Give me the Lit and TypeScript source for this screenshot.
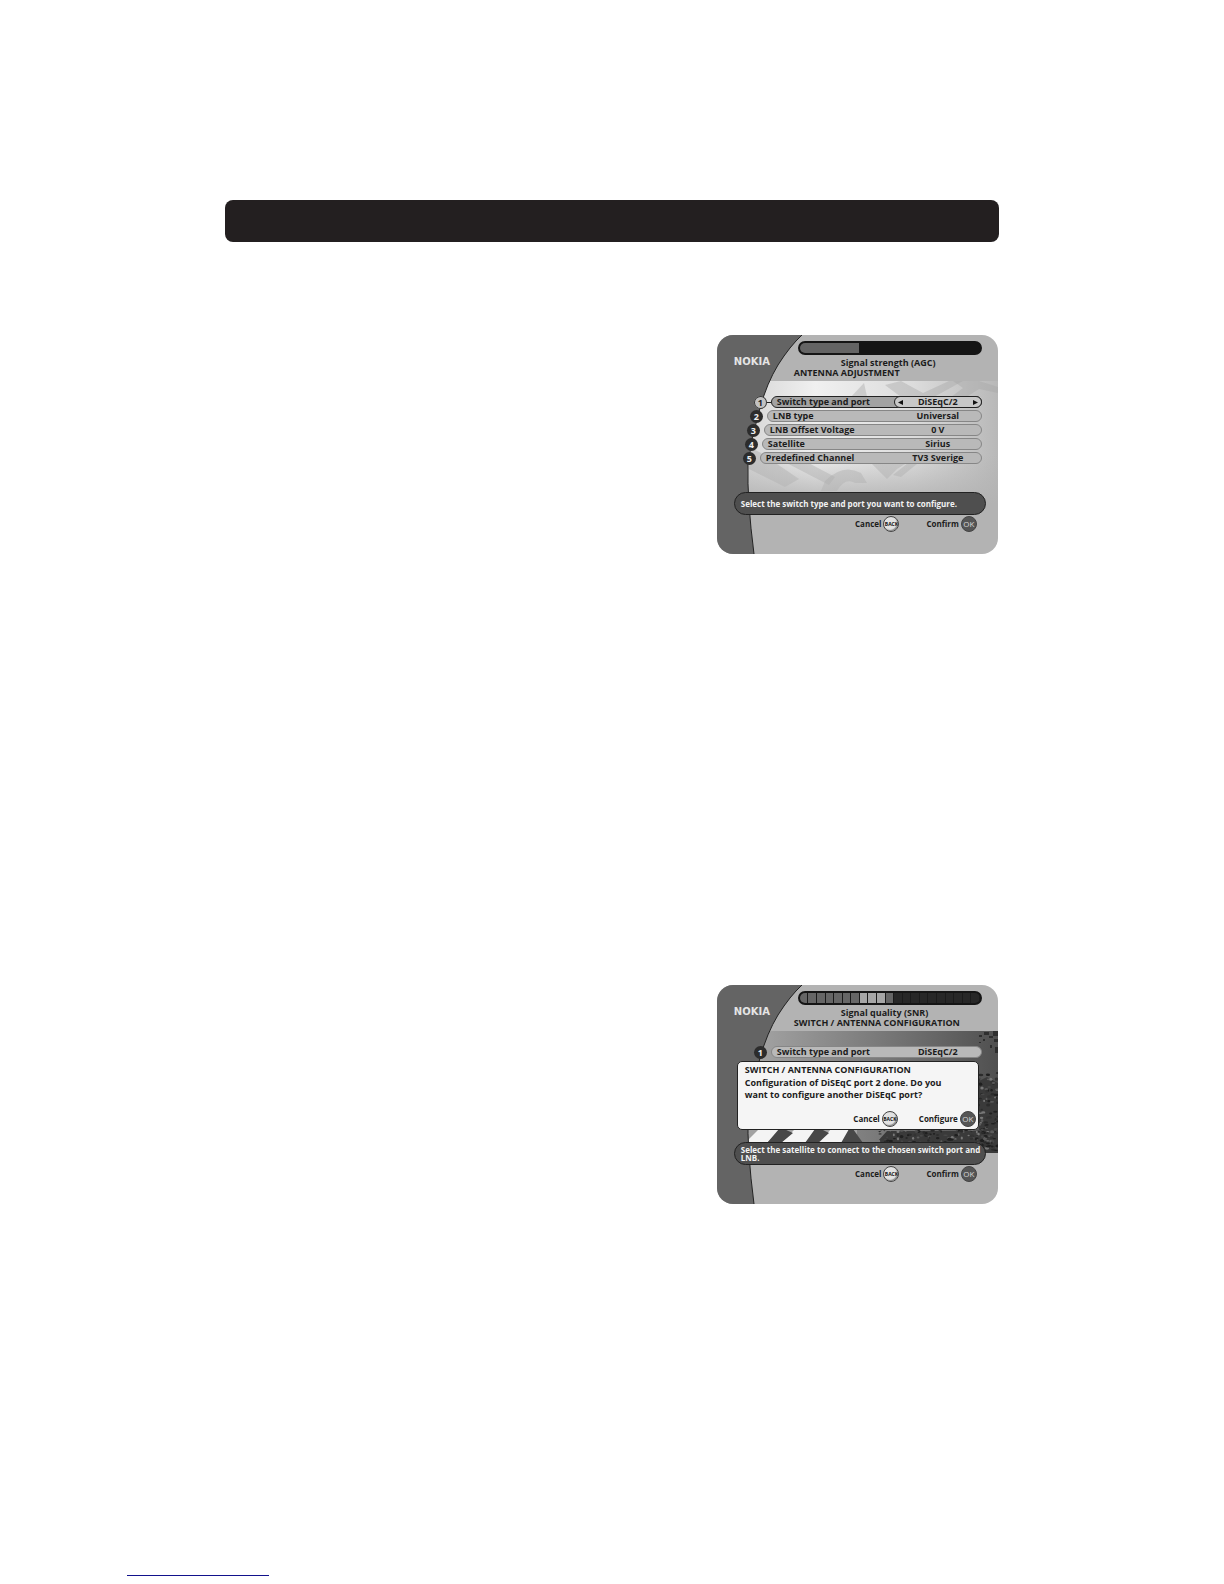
import { LitElement, html, svg, css, nothing } from "lit";
import { customElement, property } from "lit/decorators.js";

type Row = { label: string; value: string };

const EDGE = "M85 0 Q73 11 61 30 Q50 48 43 73 Q34 102 31 130 Q30 165 37 219";

@customElement("screen-art")
class ScreenArt extends LitElement {
  @property() scene = "plain";

  static styles = css`
    :host { display: block; }
    .art { display: block; width: 100%; height: 100%; }
  `;

  private plain() {
    return svg`
      <rect y="46" width="281" height="122" fill="url(#light)" />
      <g fill="#a4a4a4" fill-opacity="0.4">
        <path d="M132 64 L147 48 L151 66 Z" />
        <path d="M168 50 L184 46 L206 58 L232 46 H246 L206 68 H192 Z" />
        <path d="M236 46 H262 L281 52 V58 L262 54 L240 68 H226 L246 53 Z" />
        <path d="M32 112 L44 118 L82 144 L68 152 L32 134 Z" />
        <path d="M58 122 L84 124 L118 142 L112 150 Z" />
        <path d="M108 146 Q126 128 144 138 L150 148 H138 Q128 142 120 156 H104 Z" />
        <path d="M150 124 L196 124 L180 134 L170 144 L160 134 Z" />
        <path d="M196 124 L206 124 L184 142 L176 140 Z" />
      </g>`;
  }

  private photo() {
    const leaves = [];
    let s = 20117;
    const next = () => {
      s = (s * 1103515245 + 12345) % 2147483648;
      return s / 2147483648;
    };
    for (let i = 0; i < 260; i++) {
      const low = i % 5 < 3;
      const x = low ? 160 + next() * 120 : 259 + next() * 22;
      const y = low ? 144 + next() * 22 : 88 + next() * 76;
      const tone = ["#1f1f1f", "#5c5c5c", "#2b2b2b", "#484848", "#202020", "#787878", "#333"][i % 7];
      leaves.push(svg`<ellipse cx=${x.toFixed(1)} cy=${y.toFixed(1)} rx=${(0.8 + next() * 1.6).toFixed(1)} ry=${(0.6 + next()).toFixed(1)} fill=${tone} />`);
    }
    return svg`
      <rect y="46" width="281" height="122" fill="url(#dusk)" />
      <path d="M170 146 H262 V96 L270 92 L281 98 V168 H150 Z" fill="#3a3a3a" />
      ${leaves}
      <g fill="#2e2e2e">
        <path d="M262 50 h3 v2 h-3 z M267 47 h5 v3 h-5 z M272 51 h4 v2 h-4 z M276 46 h5 v5 h-5 z" />
        <path d="M266 54 h2 v2 h-2 z M277 54 h4 v3 h-4 z M273 60 h2 v3 h-2 z M278 62 h3 v6 h-3 z M262 57 h2 v1 h-2 z" />
      </g>
      <rect x="30" y="144" width="110" height="14" fill="#a2a2a2" />
      <g fill="#f4f4f4">
        <path d="M42 144 H64 L50 158 H30 V156 Z" />
        <path d="M78 144 H100 L88 158 H64 Z" />
        <path d="M114 144 H134 L126 158 H102 Z" />
      </g>
      <path d="M62 144 H67 L76 148 L64 158 H50 Z M98 144 H104 L112 148 L101 158 H88 Z M132 144 H136 L146 158 H124 Z" fill="#484848" />`;
  }

  render() {
    return html`<svg class="art" viewBox="0 0 281 219" preserveAspectRatio="none" aria-hidden="true">
      <defs>
        <linearGradient id="light">
          <stop offset="0.12" stop-color="#d8d8d8" />
          <stop offset="0.35" stop-color="#f0f0f0" />
          <stop offset="0.7" stop-color="#dcdcdc" />
          <stop offset="1" stop-color="#b8b8b8" />
        </linearGradient>
        <linearGradient id="fade" x2="0" y2="1">
          <stop offset="0" stop-color="#b3b3b3" stop-opacity="0" />
          <stop offset="1" stop-color="#b3b3b3" />
        </linearGradient>
        <linearGradient id="dusk">
          <stop offset="0.15" stop-color="#a2a2a2" />
          <stop offset="0.55" stop-color="#7c7c7c" />
          <stop offset="1" stop-color="#505050" />
        </linearGradient>
      </defs>
      <rect width="281" height="219" fill="#b3b3b3" />
      ${this.scene === "plain" ? this.plain() : this.photo()}
      ${this.scene === "plain" ? svg`<rect y="120" width="281" height="49" fill="url(#fade)" />` : nothing}
      <path d="${EDGE} H0 V0 Z" fill="#646464" />
      <path d=${EDGE} fill="none" stroke="#222" stroke-width="1" />
    </svg>`;
  }
}

@customElement("key-actions")
class KeyActions extends LitElement {
  @property() confirm = "Confirm";

  static styles = css`
    :host { display: flex; justify-content: flex-end; gap: 27px; }
    .action {
      display: flex; align-items: center; gap: 2px; padding: 0; border: 0;
      background: none; color: #1c1c1c; font: 700 8px/16px "Open Sans", "Noto Sans", sans-serif;
    }
    .wide { margin-left: -6px; }
    .key {
      display: flex; align-items: center; justify-content: center; box-sizing: border-box;
      width: 16px; height: 16px; border-radius: 50%; overflow: hidden;
      border: 1px solid #444; background: #555; color: #d6d6d6;
      font-size: 8px; line-height: 8px; font-weight: 400;
    }
    .back {
      background: #e2e2e2; color: #111; font-size: 5px; font-weight: 700;
      box-shadow: inset -1px -1px 1px #888;
    }
  `;

  render() {
    return html`
      <button class="action">Cancel<span class="key back">BACK</span></button>
      <button class="action ${this.confirm === "Confirm" ? "" : "wide"}">${this.confirm}<span class="key">OK</span></button>`;
  }
}

@customElement("receiver-screen")
class ReceiverScreen extends LitElement {
  @property() scene = "plain";
  @property() meter = "";
  @property() heading = "";
  @property() tip = "";
  @property({ type: Array }) rows: Row[] = [];
  @property({ type: Boolean }) dialog = false;

  static styles = css`
    :host {
      display: block; position: relative; overflow: hidden; border-radius: 16px;
      color: #1c1c1c; font: 700 9px/12px "Open Sans", "Noto Sans", sans-serif;
    }
    .backdrop { position: absolute; inset: 0; }
    .content { position: relative; display: flex; flex-direction: column; min-height: 219px; }
    .top { display: grid; grid-template-columns: 60px 1fr; height: 46px; padding: 6px 16px 0 17px; box-sizing: border-box; }
    .brand { margin: 14px 0 0; font: 700 10px/14px "DejaVu Sans", sans-serif; color: #e4e4e4; }
    .meter {
      display: flex; box-sizing: border-box; height: 14px; margin-left: 4px; border: 2px solid #151515;
      border-radius: 7px; overflow: hidden; background: #151515;
    }
    .level { width: 33%; background: #646464; }
    .cell { flex: 1; border-right: 1px solid #1b1b1b; background: #666; }
    .cell.bright { background: #a6a6a6; }
    .cell.off { background: #272727; }
    .caption { margin: 2px 0 0; padding-left: 47px; line-height: 11px; font-size: 9px; white-space: nowrap; }
    .heading { margin: 0; line-height: 10px; font-size: 9px; white-space: nowrap; }
    .rows { display: flex; flex-direction: column; gap: 2px; margin: 0; padding: 15px 16px 0 0; list-style: none; height: 96px; }
    .row { display: flex; align-items: center; gap: 4px; height: 12px; }
    .row:nth-child(1) { padding-left: 37px; }
    .row:nth-child(2) { padding-left: 33px; }
    .row:nth-child(3) { padding-left: 30px; }
    .row:nth-child(4) { padding-left: 28px; }
    .row:nth-child(5) { padding-left: 26px; }
    .num {
      flex: none; width: 13px; height: 13px; border-radius: 50%; background: #2c2c2c;
      color: #eee; text-align: center; font-size: 9px; line-height: 13px;
    }
    .field {
      flex: 1; display: grid; grid-template-columns: 1fr 86px; box-sizing: border-box; height: 12px;
      border: 1px solid #868686; border-radius: 6px; background: #b9b9b9; line-height: 10px; white-space: nowrap;
    }
    .name { padding-left: 5px; }
    .value { text-align: center; }
    .active { gap: 0; }
    .active::after { content: ""; order: 1; width: 4px; height: 1px; background: #222; }
    .active .num { background: #c2c2c2; color: #222; box-shadow: inset 0 0 0 1px #333; }
    .active .field { order: 2; border-color: #222; background: #a2a2a2; }
    .active .value {
      display: flex; justify-content: space-between; align-items: center; box-sizing: border-box; margin: -1px;
      border: 1px solid #222; border-radius: 6px; background: #c8c8c8;
    }
    .step { display: flex; padding: 0 3px; border: 0; background: none; }
    .arrow { width: 5px; height: 5px; fill: #111; }
    .tip {
      display: flex; align-items: center; box-sizing: border-box; height: 23px; margin: 0 12px 0 17px;
      padding: 0 4px 0 6px; border: 1px solid #222; border-radius: 12px; background: #4f4f4f;
      color: #f2f2f2; font-size: 8px; line-height: 8px;
    }
    .text { margin: 0; }
    .keys { padding: 1px 21px 0 0; }
    .dialog {
      position: absolute; left: 20px; right: 19px; top: 76px; box-sizing: border-box; height: 69px;
      padding: 2px 2px 0 7px; border: 1px solid #222; border-radius: 5px; background: #f5f5f5;
    }
    .ask { margin: 0; font-size: 9px; line-height: 12px; white-space: nowrap; }
    .body { margin: 1px 0 0; line-height: 12px; white-space: nowrap; }
    .choice { margin-top: 10px; }
  `;

  private cells() {
    return Array.from({ length: 21 }, (_, i) => {
      const tone = i > 10 ? "off" : i > 6 && i < 10 ? "bright" : "";
      return html`<span class="cell ${tone}"></span>`;
    });
  }

  private row(row: Row, index: number) {
    const active = !this.dialog && index === 0;
    return html`<li class="row ${active ? "active" : ""}">
      <span class="num">${index + 1}</span>
      <span class="field">
        <span class="name">${row.label}</span>
        <span class="value">${active
          ? html`<button class="step"><svg class="arrow" viewBox="0 0 4 4"><path d="M4 0V4L0 2Z" /></svg></button>
              <span>${row.value}</span>
              <button class="step"><svg class="arrow" viewBox="0 0 4 4"><path d="M0 0V4L4 2Z" /></svg></button>`
          : row.value}</span>
      </span>
    </li>`;
  }

  render() {
    return html`
      <screen-art class="backdrop" .scene=${this.scene}></screen-art>
      <div class="content">
        <header class="top">
          <p class="brand">NOKIA</p>
          <div class="titles">
            <div class="meter">${this.dialog ? this.cells() : html`<span class="level"></span>`}</div>
            <p class="caption">${this.meter}</p>
            <h2 class="heading">${this.heading}</h2>
          </div>
        </header>
        <ol class="rows">${this.rows.map((r, i) => this.row(r, i))}</ol>
        <div class="tip"><p class="text">${this.tip}</p></div>
        <key-actions class="keys"></key-actions>
        ${this.dialog
          ? html`<section class="dialog" role="dialog">
              <h3 class="ask">${this.heading}</h3>
              <p class="body">Configuration of DiSEqC port 2 done. Do you<br />want to configure another DiSEqC port?</p>
              <key-actions class="choice" confirm="Configure"></key-actions>
            </section>`
          : nothing}
      </div>`;
  }
}

const SETTINGS: Row[] = [
  { label: "Switch type and port", value: "DiSEqC/2" },
  { label: "LNB type", value: "Universal" },
  { label: "LNB Offset Voltage", value: "0 V" },
  { label: "Satellite", value: "Sirius" },
  { label: "Predefined Channel", value: "TV3 Sverige" },
];

@customElement("app-root")
class AppRoot extends LitElement {
  static styles = css`
    :host { display: block; background: #fff; }
    .page { display: flex; flex-direction: column; padding: 200px 18.4% 0; }
    .band { height: 42px; border-radius: 8px; background: #231f20; }
    .screen { align-self: flex-end; width: 281px; max-width: 100%; margin-right: 1px; }
    .first { margin-top: 93px; }
    .second { margin-top: 431px; }
    .foot { padding: 371px 127px 8px; }
    .rule { width: 142px; height: 1px; margin: 0; border: 0; background: #12128c; }
  `;

  render() {
    return html`
      <main class="page">
        <div class="band"></div>
        <receiver-screen class="screen first" scene="plain" meter="Signal strength (AGC)"
          heading="ANTENNA ADJUSTMENT" .rows=${SETTINGS}
          tip="Select the switch type and port you want to configure."></receiver-screen>
        <receiver-screen class="screen second" scene="photo" meter="Signal quality (SNR)"
          heading="SWITCH / ANTENNA CONFIGURATION" .rows=${SETTINGS.slice(0, 1)} dialog
          tip="Select the satellite to connect to the chosen switch port and LNB."></receiver-screen>
      </main>
      <footer class="foot"><hr class="rule" /></footer>`;
  }
}
